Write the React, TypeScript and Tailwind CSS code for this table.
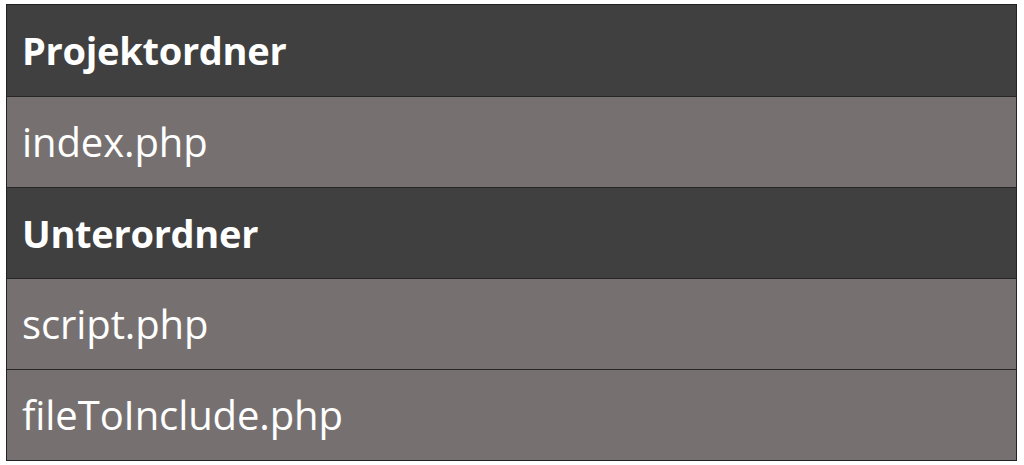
const rows = [
  { label: "Projektordner", folder: true },
  { label: "index.php", folder: false },
  { label: "Unterordner", folder: true },
  { label: "script.php", folder: false },
  { label: "fileToInclude.php", folder: false },
];

const App = () => {
  return (
    <div className="w-[1024px] h-[465px] bg-white pt-[4px] pl-[6px]">
      <div className="w-[1011px] flex flex-col border border-[#222] font-['Open_Sans',sans-serif] text-white">
        {rows.map((row, i) => (
          <div
            key={row.label}
            className={`h-[91px] flex items-center pl-[15px] ${i > 0 ? "border-t border-[#262626]" : ""} ${
              row.folder
                ? "bg-[#404040] font-bold text-[38px] tracking-[-0.3px]"
                : "bg-[#767170] text-[40px] tracking-[-0.1px]"
            }`}
          >
            {row.label}
          </div>
        ))}
      </div>
    </div>
  );
};

export default App;
